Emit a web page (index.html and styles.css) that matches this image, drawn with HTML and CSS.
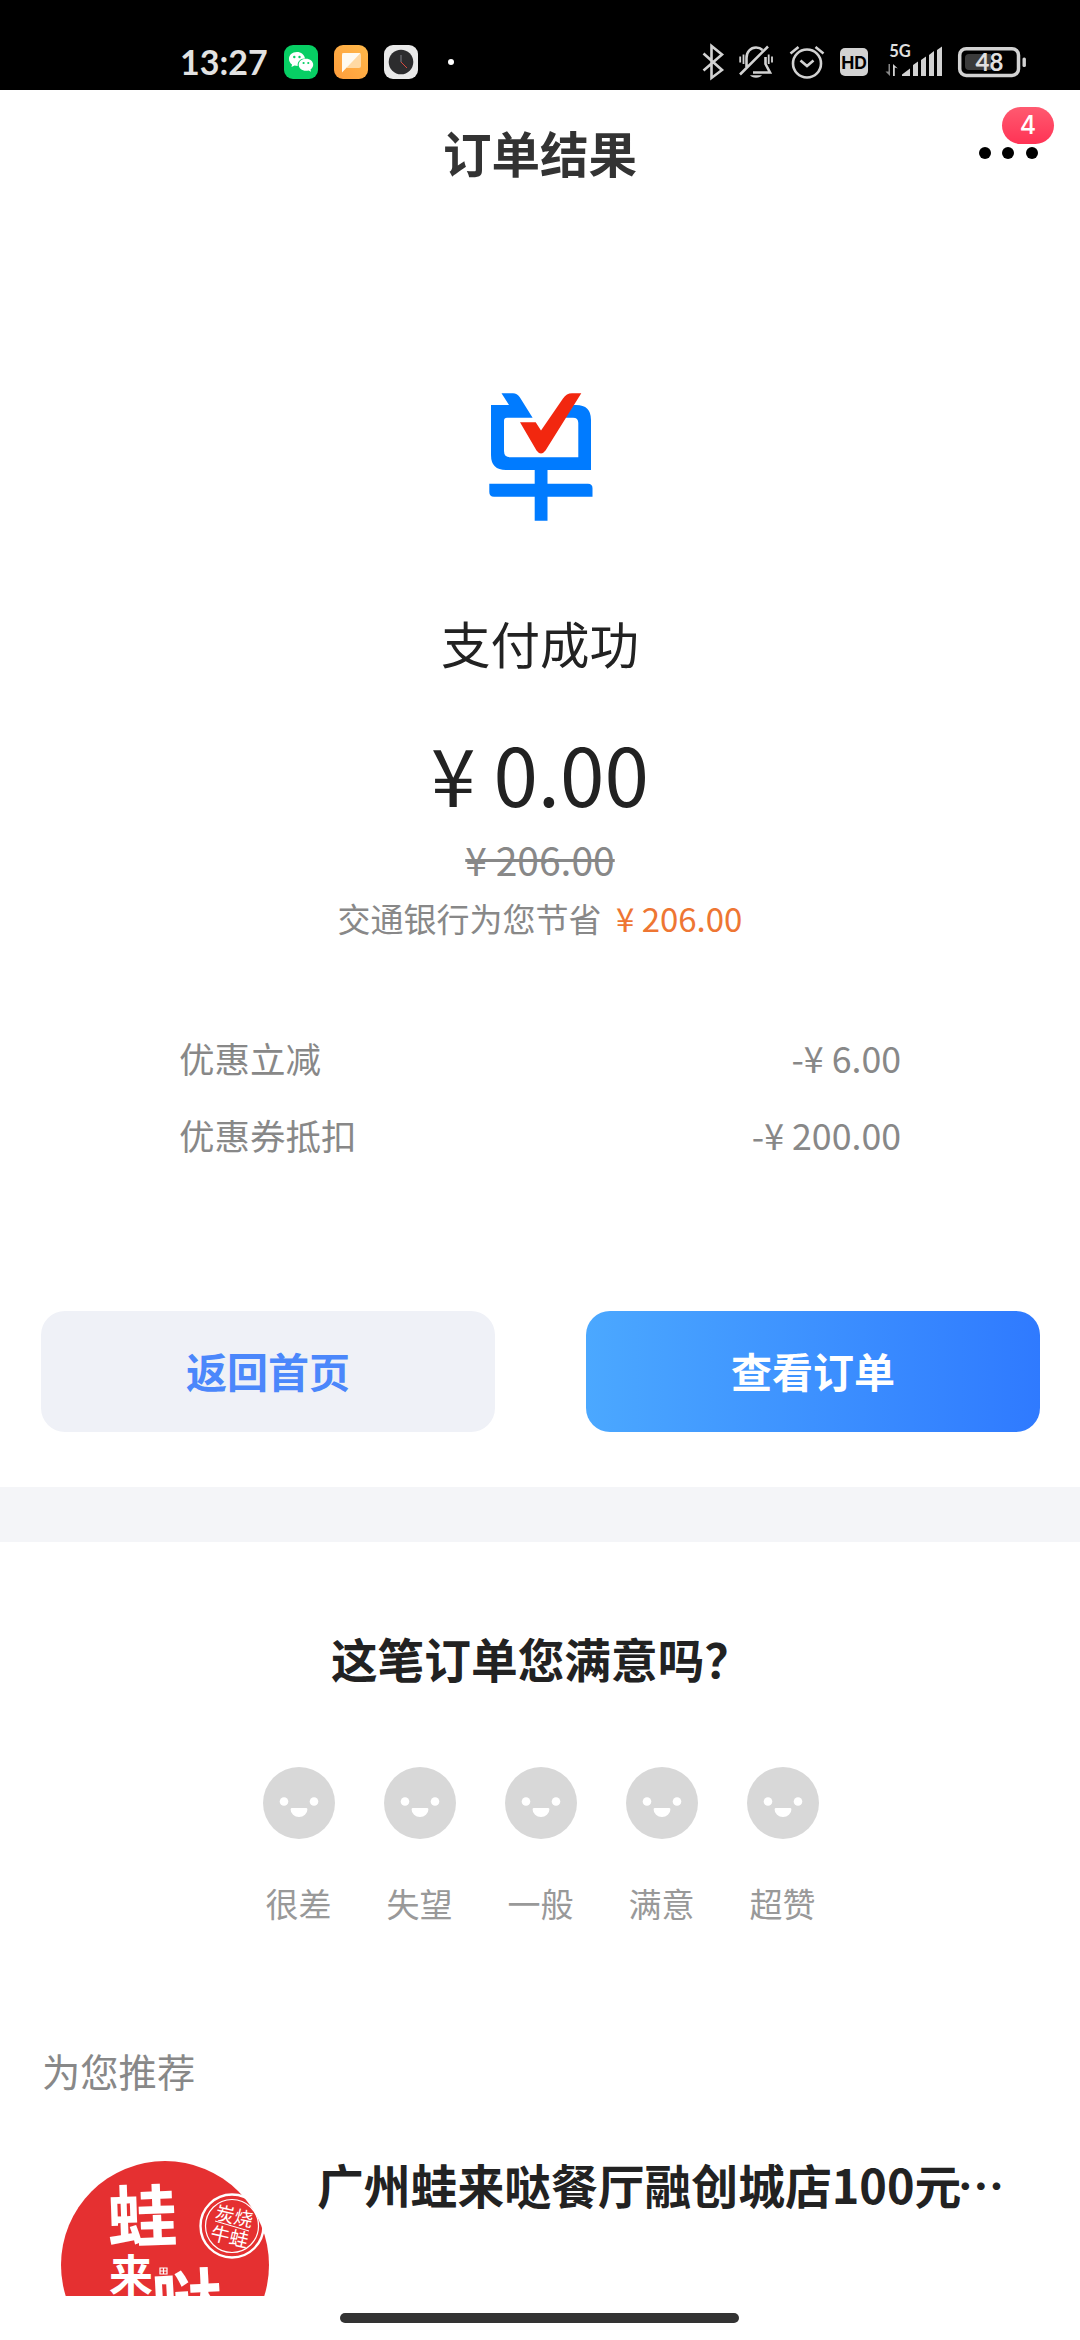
FILE: index.html
```html
<!DOCTYPE html>
<html lang="zh-CN">
<head>
<meta charset="utf-8">
<title>订单结果</title>
<link rel="stylesheet" href="styles.css">
</head>
<body>
<div class="screen">
  <div class="status">
    <div class="status-left">
      <span class="clock">13:27</span>
      <svg class="app-icon" viewBox="0 0 34 34"><rect width="34" height="34" rx="9" fill="#07cf64"/><path fill="#fff" d="M13 7C8 7 5 10 5 14c0 2.300 1.200 4.200 3 5.500L7.500 22l3-1.400 3.200.4c-.6-4.500 3-7.800 7.300-7.500C20.300 9.500 17 7 13 7z"/><path fill="#fff" d="M22 13.800c-4.200 0-7.300 2.600-7.300 6s3.100 6 7.300 6c.9 0 1.800-.1 2.600-.4l2.400 1.300-.5-2.200c1.700-1.200 2.700-2.800 2.700-4.700 0-3.400-3-6-7.200-6z"/><g fill="#07cf64"><circle cx="10.300" cy="12" r="1.200"/><circle cx="15.500" cy="12" r="1.200"/><circle cx="19.600" cy="18" r="1.100"/><circle cx="24.300" cy="18" r="1.100"/></g></svg>
      <svg class="app-icon" viewBox="0 0 34 34"><defs><linearGradient id="og" x1="0" y1="1" x2="1" y2="0"><stop offset="0" stop-color="#ff9d3c"/><stop offset="1" stop-color="#ffb94a"/></linearGradient></defs><rect width="34" height="34" rx="9" fill="url(#og)"/><path fill="#ffd9a3" d="M8 8h17a2 2 0 0 1 2 2v11a2 2 0 0 1-2 2H13z"/><path fill="#fffaf0" d="M10 8h16.500L8 27.500V10a2 2 0 0 1 2-2z"/></svg>
      <svg class="app-icon" viewBox="0 0 34 34"><rect width="34" height="34" rx="9" fill="#e9e9e9"/><circle cx="17" cy="17" r="12.300" fill="#2c2c2e"/><path stroke="#55555a" stroke-width="2" d="M17 17v-7"/><path stroke="#d8493f" stroke-width="1" d="M17 17l6 6"/></svg>
      <i class="more-dot"></i>
    </div>
    <svg class="status-right" viewBox="700 42 330 40" fill="none" stroke="#d2d2d2" stroke-width="2.600">
      <path d="M703.500 53.500L722 70l-10.500 8V46L722 54.500 703.500 70.500" stroke-linejoin="miter"/>
      <g><path d="M746.500 67V58c0-6 4-10.500 9.500-10.500 3 0 5 1 6.500 2.500M765.500 57v7l4.500 8.500H753M740 74.500L768 46.500"/><path d="M750 75.200a6.500 4 0 0 0 12 0z" fill="#d2d2d2" stroke="none"/><path stroke-width="1.800" d="M740.200 56.500v6M743.500 54.500v9.500M768.700 54.500v9.500M772 56.500v6"/></g>
      <g><circle cx="807" cy="63.500" r="14"/><path d="M800.500 60.500l6.500 5.500 6.500-5.500M790.500 53.500l8-6.500M823.500 53.500l-8-6.500"/></g>
      <rect x="840" y="48" width="28" height="28" rx="5" fill="#d2d2d2" stroke="none"/>
      <text class="hd" x="854" y="69" text-anchor="middle">HD</text>
      <text class="net" x="889.300" y="57">5G</text>
      <g fill="#d2d2d2" stroke="none"><path d="M902 76v-1.500l8-6V76zM913 76V65l5-3.500V76zM921 76V60l5-3.500V76zM929 76V55l5-4V76zM937 76V50l5-3.500V76z"/><path d="M893 64v12h1.800v-8.500l3 1z"/><path fill="#888" d="M890 64v12l-4.500-4.500h3V64z"/></g>
      <rect x="959.700" y="48.700" width="58.800" height="26.800" rx="6.500" stroke-width="3.500"/>
      <path d="M969 54h22v16h-22q-4 0-4-4v-8q0-4 4-4z" fill="#3b3b3b" stroke="none"/>
      <rect x="1022.500" y="57.500" width="3.400" height="9.500" rx="1.500" fill="#d2d2d2" stroke="none"/>
      <text class="pct" x="989.500" y="71" text-anchor="middle">48</text>
    </svg>
  </div>

  <header class="header">
    <h1>订单结果</h1>
    <div class="menu"><i></i><i></i><i></i><span class="badge">4</span></div>
  </header>

  <section class="result">
    <svg class="logo" viewBox="0 0 104 128"><path fill="#007bff" fill-rule="evenodd" d="M12.500.3H24q4 .2 6.800 4L43.600 24.700H18Q15 24.700 15 27.700V58q0 6.300 6.300 6.300H89.300V30q0-5.300-5.300-5.300H76L84.500 12H87Q102 12 102 27V77H58.500V90.700H99q4.500 0 4.500 4.500V103.700H58.500V127.700H45.700V103.700H5q-4.700 0-4.700-4.700V90.700H45.700V77H17Q2 77 2 62V12H20z"/><path fill="#f2270f" d="M31 29.300H46.700L52 37.500 74 5.500Q77.500.3 83 .3H92.300L56.500 57.500Q52 63.500 47.500 57.500z"/></svg>
    <p class="state">支付成功</p>
    <p class="amount">¥ 0.00</p>
    <p class="origin">¥ 206.00</p>
    <p class="saved">交通银行为您节省 <span class="saved-sum">¥ 206.00</span></p>
    <dl class="discounts">
      <div class="discount"><dt>优惠立减</dt><dd>-¥ 6.00</dd></div>
      <div class="discount"><dt>优惠券抵扣</dt><dd>-¥ 200.00</dd></div>
    </dl>
    <div class="actions">
      <button class="btn btn-plain">返回首页</button>
      <button class="btn btn-primary">查看订单</button>
    </div>
  </section>

  <section class="survey">
    <svg width="0" height="0" class="defs"><symbol id="face" viewBox="0 0 72 72"><circle cx="36" cy="36" r="36" fill="#d8d8d8"/><circle cx="21" cy="34.500" r="4.300" fill="#fff"/><circle cx="51" cy="34.500" r="4.300" fill="#fff"/><path fill="#fff" d="M29 41h14q1.500 0 1.400 1.400a8.400 7.600 0 0 1-16.800 0Q27.500 41 29 41z"/></symbol></svg>
    <h2>这笔订单您满意吗？</h2>
    <div class="faces">
      <div class="face"><svg><use href="#face"/></svg><span>很差</span></div>
      <div class="face"><svg><use href="#face"/></svg><span>失望</span></div>
      <div class="face"><svg><use href="#face"/></svg><span>一般</span></div>
      <div class="face"><svg><use href="#face"/></svg><span>满意</span></div>
      <div class="face"><svg><use href="#face"/></svg><span>超赞</span></div>
    </div>
  </section>

  <section class="recommend">
    <h3>为您推荐</h3>
    <article class="shop">
      <svg class="shop-logo" viewBox="0 0 208 135"><circle cx="104" cy="104" r="104" fill="#e53031"/>
        <g class="brush"><text font-size="68" transform="translate(47 82) rotate(-2) scale(1.030 1)">蛙</text><text font-size="44" transform="translate(48 131)">来</text><text font-size="72" transform="translate(92 170) rotate(-3)">哒</text></g>
        <g fill="none" stroke="#fff"><circle cx="171" cy="65" r="31.500" stroke-width="2.400"/><circle cx="171" cy="65" r="26.500" stroke-width="1.200"/><path stroke-width="1" d="M154 60l34 10"/></g>
        <g class="seal" transform="translate(171 65) rotate(13)"><text x="-19" y="-3">炭烧</text><text x="-19" y="18">牛蛙</text></g>
        <path stroke="#fff" fill="none" stroke-width="1.200" d="M99 107h7v6h-7zM99 110h7M102.500 107v6"/>
      </svg>
      <h4>广州蛙来哒餐厅融创城店100元<span class="dots">…</span></h4>
    </article>
  </section>
  <div class="home-bar"></div>
</div>
</body>
</html>
```
FILE: styles.css
```css
* { box-sizing: border-box; margin: 0; padding: 0; }
body { background: #fff; font-family: "Noto Sans CJK SC", sans-serif; color: #222; }
h1, h2, h3, h4, p, dt, dd { white-space: nowrap; }
.screen { width: 1080px; height: 2340px; overflow: hidden; display: flex; flex-direction: column; background: #fff; }

.status { height: 90px; flex: none; background: #000; display: flex; justify-content: space-between; padding: 42px 50px 0 180px; }
.status-left { display: flex; align-items: center; height: 40px; gap: 16px; }
.clock { width: 88px; font: 700 34px/40px Lato, sans-serif; color: #e2e2e2; }
.app-icon { width: 34px; height: 34px; }
.more-dot { width: 6px; height: 6px; border-radius: 50%; background: #fff; margin-left: 14px; }
.status-right { width: 330px; height: 40px; }
.status-right text { stroke: none; fill: #e0e0e0; font-family: Lato, sans-serif; font-weight: 700; }
.status-right .hd { font-family: Inter, sans-serif; font-size: 17.500px; fill: #000; }
.status-right .net { font-size: 16.500px; }
.status-right .pct { font-size: 24px; }

.header { height: 130px; flex: none; position: relative; display: flex; align-items: flex-start; justify-content: center; padding-top: 27px; }
h1 { font-size: 48.500px; font-weight: 700; line-height: 70px; color: #333; }
.menu { position: absolute; left: 979px; top: 57px; display: flex; gap: 11.300px; }
.menu i { width: 12px; height: 12px; border-radius: 50%; background: #000; }
.badge { position: absolute; left: 23px; top: -40px; width: 52px; height: 37px; border-radius: 18.500px; background: linear-gradient(#ff5a70, #ff3355); color: #fff; font: 500 25px/37px Inter, sans-serif; text-align: center; }

.result { height: 1267px; flex: none; display: flex; flex-direction: column; align-items: center; padding-top: 173px; }
.logo { width: 104px; height: 128px; margin-left: 2px; }
.state { font-size: 49.500px; line-height: 72px; margin-top: 86px; }
.amount { font-size: 80px; line-height: 116px; margin-top: 35px; }
.origin { font-size: 39px; line-height: 56px; margin-top: 1px; color: #888; text-decoration: line-through; }
.saved { font-size: 33px; line-height: 48px; margin-top: 7px; color: #888; }
.saved-sum { color: #ee7633; margin-left: 7px; }
.discounts { width: 722px; margin-top: 90px; display: grid; gap: 25px; }
.discount { display: flex; justify-content: space-between; color: #888; line-height: 52px; }
dt { font-size: 35.500px; }
dd { font-size: 35.700px; }
.actions { align-self: stretch; display: flex; justify-content: space-between; margin-top: 150px; padding: 0 40px 0 41px; }
.btn { width: 454px; height: 121px; border: 0; border-radius: 24px; padding-bottom: 3px; font: 700 41px/60px "Noto Sans CJK SC", sans-serif; }
.btn-plain { background: #eff1f7; color: #4b87fb; }
.btn-primary { background: linear-gradient(90deg, #4ba8ff, #2f7aff); color: #fff; }

.survey { height: 488px; flex: none; border-top: 55px solid #f4f5f8; display: flex; flex-direction: column; align-items: center; padding-top: 82px; }
.defs { position: absolute; }
h2 { font-size: 46.700px; line-height: 68px; padding-left: 2px; }
.faces { display: flex; gap: 49px; margin-top: 75px; padding-left: 1px; }
.face { width: 72px; display: flex; flex-direction: column; align-items: center; }
.face svg { width: 72px; height: 72px; }
.face span { font-size: 33px; line-height: 48px; margin-top: 40px; color: #999; white-space: nowrap; }

.recommend { height: 321px; flex: none; padding: 68px 42px 0; }
h3 { font-size: 38.300px; line-height: 56px; font-weight: 400; color: #888; }
.shop { display: flex; margin-top: 62px; padding-left: 19px; gap: 48px; height: 135px; }
.shop-logo { width: 208px; height: 135px; flex: none; }
.brush text { font-family: "Noto Sans CJK SC", sans-serif; font-weight: 700; fill: #fff; }
.seal text { font-family: "Noto Sans CJK SC", sans-serif; font-size: 19px; fill: #fff; }
h4 { font-size: 46.800px; line-height: 68px; margin-top: -11px; }
.dots { margin-left: -4px; letter-spacing: -2px; }
.home-bar { width: 399px; height: 10px; border-radius: 5px; background: #333; margin: 17px 0 0 340px; flex: none; }
```
